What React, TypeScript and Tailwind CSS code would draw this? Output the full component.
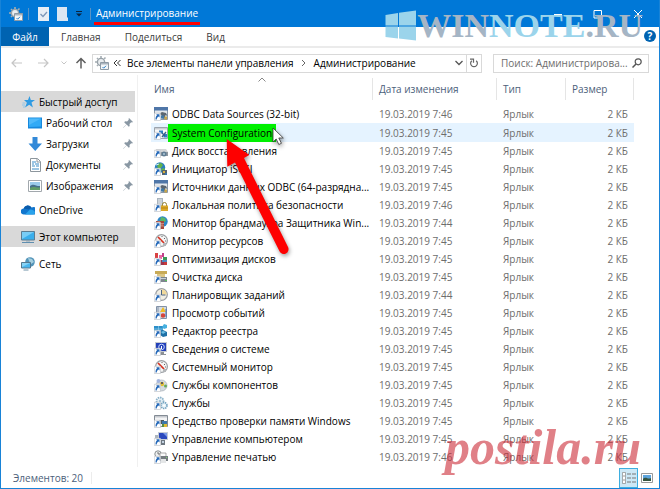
import React, { useState } from 'react';

type IconName =
    | 'odbc' | 'config' | 'drive' | 'globe' | 'policy' | 'firewall' | 'gauge' | 'defrag' | 'cleanup'
    | 'clock' | 'events' | 'registry' | 'info' | 'components' | 'services' | 'memory' | 'computer' | 'printer';

interface FileItem {
    name: string;
    date: string;
    icon: IconName;
}

const files: FileItem[] = [
    { name: 'ODBC Data Sources (32-bit)', date: '19.03.2019 7:46', icon: 'odbc' },
    { name: 'System Configuration', date: '19.03.2019 7:45', icon: 'config' },
    { name: 'Диск восстановления', date: '19.03.2019 7:45', icon: 'drive' },
    { name: 'Инициатор iSCSI', date: '19.03.2019 7:45', icon: 'globe' },
    { name: 'Источники данных ODBC (64-разрядна...', date: '19.03.2019 7:45', icon: 'odbc' },
    { name: 'Локальная политика безопасности', date: '19.03.2019 7:46', icon: 'policy' },
    { name: 'Монитор брандмауэра Защитника Win...', date: '19.03.2019 7:44', icon: 'firewall' },
    { name: 'Монитор ресурсов', date: '19.03.2019 7:45', icon: 'gauge' },
    { name: 'Оптимизация дисков', date: '19.03.2019 7:45', icon: 'defrag' },
    { name: 'Очистка диска', date: '19.03.2019 7:45', icon: 'cleanup' },
    { name: 'Планировщик заданий', date: '19.03.2019 7:44', icon: 'clock' },
    { name: 'Просмотр событий', date: '19.03.2019 7:45', icon: 'events' },
    { name: 'Редактор реестра', date: '19.03.2019 7:45', icon: 'registry' },
    { name: 'Сведения о системе', date: '19.03.2019 7:45', icon: 'info' },
    { name: 'Системный монитор', date: '19.03.2019 7:45', icon: 'gauge' },
    { name: 'Службы компонентов', date: '19.03.2019 7:45', icon: 'components' },
    { name: 'Службы', date: '19.03.2019 7:45', icon: 'services' },
    { name: 'Средство проверки памяти Windows', date: '19.03.2019 7:45', icon: 'memory' },
    { name: 'Управление компьютером', date: '19.03.2019 7:45', icon: 'computer' },
    { name: 'Управление печатью', date: '19.03.2019 7:46', icon: 'printer' },
];

const fileIcons: Record<IconName, React.ReactNode> = {
    odbc: (
        <>
            <path d="M0.5 0.5h13v12h-13z" fill="#e3e8ed" stroke="#8a98a8" />
            <path d="M0 0h14v3.5H0z" fill="#4f76a8" />
            <path d="M5 7l3-2 4 1 1.500 3-2-1-1 4-3-1V8z" fill="#5b6670" />
            <path d="M10.500 9.500h2.500v3h-2.500z" fill="#c9a64a" />
            <path d="M7 8.500h3v3H7z" fill="#3f79a8" />
        </>
    ),
    config: (
        <>
            <path d="M0.5 1.5h13v11h-13z" fill="#fafafa" stroke="#9aa3ad" />
            <path d="M1 2h12v1.5H1z" fill="#c8ccd2" />
            <path d="M5 4.500h4v3H5zM9.500 8h3.500v3.500H9.500z" fill="#2f7fc4" />
            <path d="M8 7l3 3M8 11l4-5" stroke="#3a5f8c" strokeWidth="1.300" />
        </>
    ),
    drive: (
        <>
            <path d="M2 5h10l2 3v4H1V8z" fill="#d3d5d7" />
            <path d="M2 8h12v4H2z" fill="#90979e" />
            <circle cx="10" cy="10" r="2.500" fill="#5f7d94" />
            <path d="M9 10h2" stroke="#d8edf8" />
        </>
    ),
    globe: (
        <>
            <circle cx="6" cy="5.500" r="5.200" fill="#2a7fc0" />
            <path d="M3 2l4-1 2 2-2 3-3 1zM7 7l3-1 1 2-3 2z" fill="#63b24b" />
            <path d="M2 3l3-1" stroke="#c9ecff" />
            <path d="M8 8h5v5H8z" fill="#55636e" />
            <path d="M9 9h2v2H9z" fill="#d8b13c" />
            <path d="M11 11h2v2h-2z" fill="#3976ad" />
        </>
    ),
    policy: (
        <>
            <path d="M3 0h6v11H3z" fill="#aab4bd" />
            <path d="M4 2h4M4 4h4M4 6h4" stroke="#eef2f5" />
            <path d="M8.500 8V6.500a2 2 0 014 0V8" fill="none" stroke="#94802f" />
            <path d="M7 7.500h7V13H7z" fill="#dcaa2a" />
            <path d="M7 10h7" stroke="#b98512" />
        </>
    ),
    firewall: (
        <>
            <circle cx="8.500" cy="5.500" r="5.200" fill="#2c86c9" />
            <path d="M7 1l4 1 1 3-3 2-3-2z" fill="#5cb663" />
            <path d="M2 5h8v8H2z" fill="#a7483a" />
            <path d="M2 7.500h8M2 10h8M5 5v2M8 8v2M5 10v3" stroke="#dba397" strokeWidth="0.700" />
        </>
    ),
    gauge: (
        <>
            <circle cx="7.500" cy="6.500" r="5.900" fill="#f3f4f4" stroke="#9b9fa3" strokeWidth="1.200" />
            <path d="M4 3l6 6" stroke="#d5301f" strokeWidth="1.700" />
            <path d="M8 2v1M11 4l-1 1M12 7h-1" stroke="#666" />
            <path d="M9 9h3v3H9z" fill="#b2b5b8" />
        </>
    ),
    defrag: (
        <>
            <path d="M1 1h3v5H1z" fill="#d94343" />
            <path d="M5 3h3v4H5z" fill="#eb67a2" />
            <path d="M8 1h2v4H8z" fill="#c1418b" />
            <path d="M9 5h4v3H9z" fill="#3a9a56" />
            <path d="M6 8h7v5H6z" fill="#9b364e" />
            <path d="M8 8h5v2H8z" fill="#4a8ac2" />
            <path d="M10 10h3v3h-3z" fill="#c93a3a" />
        </>
    ),
    cleanup: (
        <>
            <path d="M1 1h12v3H1z" fill="#c8aa57" />
            <path d="M3 4h8v3H3z" fill="#dcc684" />
            <path d="M5 7h8v5H5z" fill="#7d868e" />
            <path d="M6 8h6v1H6z" fill="#c9d0d5" />
            <path d="M11 10h2v1h-2z" fill="#5cc25b" />
        </>
    ),
    clock: (
        <>
            <circle cx="7.500" cy="6.500" r="5.800" fill="#f2efe4" stroke="#9a9ea3" strokeWidth="1.300" />
            <path d="M7.500 1.200a5.300 5.300 0 015.300 5.300H7.500z" fill="#f1d99a" />
            <path d="M7.500 2v5h4" fill="none" stroke="#4b6584" />
        </>
    ),
    events: (
        <>
            <path d="M2.500 0.500h10v12h-10z" fill="#d5dde6" stroke="#8292a8" />
            <path d="M4 1v11" stroke="#8292a8" />
            <path d="M6 6l3-5 3 5z" fill="#f0bd28" />
            <circle cx="9" cy="9.500" r="2.300" fill="#d4463b" />
            <path d="M12 3v8" stroke="#4972ad" />
        </>
    ),
    registry: (
        <>
            <path d="M0 2h9v7H0z" fill="#2d8fc9" />
            <path d="M0 5h9M4.500 2v7" stroke="#8ed0ee" strokeWidth="0.700" />
            <path d="M10 0l3 1v3l-3 1-2-2z" fill="#47b0df" />
            <path d="M6 7l3-1 4 2v4l-4 1-3-2z" fill="#1e6fa5" />
            <path d="M9 7l3 1-3 2-2-2z" fill="#6dbfe4" />
        </>
    ),
    info: (
        <>
            <path d="M1 0h12v10H1z" fill="#c5c9d0" />
            <path d="M2 1h10v8H2z" fill="#2340b8" />
            <circle cx="7.500" cy="5" r="2.800" fill="none" stroke="#c3d4ff" />
            <path d="M7.500 4v3" stroke="#fff" />
            <path d="M6 10h4v2h2v1H5z" fill="#8c9095" />
        </>
    ),
    components: (
        <>
            <circle cx="7.500" cy="7.500" r="5.500" fill="#d5dbe0" stroke="#a7afb6" strokeWidth="0.700" />
            <circle cx="4.500" cy="3" r="2" fill="#a5b6de" />
            <circle cx="8" cy="6" r="2.200" fill="#e2bf35" />
            <path d="M7 4h2v2H7z" fill="#68615d" />
            <circle cx="11.500" cy="8" r="1.500" fill="#68a957" />
        </>
    ),
    services: (
        <>
            <circle cx="6" cy="5" r="3.500" fill="#edf5fa" stroke="#8db3ca" strokeWidth="1.800" strokeDasharray="1.500 0.800" />
            <circle cx="10" cy="9.500" r="3" fill="#e4f1f8" stroke="#77a5c1" strokeWidth="1.600" strokeDasharray="1.400 0.700" />
            <circle cx="6" cy="5" r="1.300" fill="#a4c5d8" />
            <circle cx="10" cy="9.500" r="1" fill="#fff" />
        </>
    ),
    memory: (
        <>
            <path d="M0.500 1.500h13v11h-13z" fill="#f3f4f5" stroke="#838b94" />
            <path d="M1 2h12v1.500H1z" fill="#c5c9ce" />
            <path d="M5 6h5v4H5z" fill="#4e575d" />
            <path d="M8 7h5v6H8z" fill="#3e77ab" />
            <path d="M10 10h3v3h-3z" fill="#e1b935" />
            <path d="M8 10h2v3H8z" fill="#588e45" />
        </>
    ),
    computer: (
        <>
            <path d="M4 0h10v8H4z" fill="#c5ccd6" />
            <path d="M5 1h8v6H5z" fill="#2b49bd" />
            <path d="M9 1h4v4z" fill="#7c9be7" />
            <path d="M1 3h3v6H1z" fill="#abb5be" />
            <path d="M7 8h4v5H7z" fill="#6e7881" />
            <path d="M8 9h2v2H8z" fill="#c1d0df" />
        </>
    ),
    printer: (
        <>
            <circle cx="4" cy="4" r="3.200" fill="#eef0f0" stroke="#878d90" />
            <path d="M4 2v2h2" stroke="#555" fill="none" strokeWidth="0.800" />
            <path d="M6 3h6v4H6z" fill="#fafafa" stroke="#888" strokeWidth="0.700" />
            <path d="M5 6h9v5H5z" fill="#747b80" />
            <path d="M7 9h5v4H7z" fill="#e4e6e7" />
            <path d="M12 7h1v1h-1z" fill="#7fd26f" />
        </>
    ),
};

const FileIcon: React.FC<{ name: IconName }> = ({ name }) => (
    <svg viewBox="0 0 14 14" className="h-3.5 w-3.5 shrink-0">
        {fileIcons[name]}
        {/* shortcut badge */}
        <path d="M0.300 6.300h6.200v7.200h-6.200z" fill="#fff" stroke="#b9bec4" strokeWidth="0.600" />
        <path d="M1.500 12.500c0-2.400.6-3.700 1.600-4.300l-.9-1h3.300v3.300l-1-.9c-1 .6-1.600 1.500-1.800 2.900z" fill="#2468b8" />
    </svg>
);

const ToolsIcon: React.FC = () => (
    <svg viewBox="0 0 14 14" className="h-3.5 w-3.5 shrink-0">
        <circle cx="6" cy="6" r="3.600" fill="#e9edf0" stroke="#98a1a8" strokeWidth="1.400" />
        <path d="M6 0v2M6 10v2M0 6h2M2 2l1 1M9 3l1.500-1.500M2 10l1-1" stroke="#a4adb3" strokeWidth="1.600" />
        <path d="M5.500 6.500h8v7h-8z" fill="#f3f6f8" stroke="#8e9aa5" />
        <path d="M6 7h7v1.500H6z" fill="#aab5bf" />
        <path d="M7.500 11l1.200 1.200L11 9.800" stroke="#2e83cb" fill="none" />
    </svg>
);

type NavIcon = 'star' | 'desktop' | 'download' | 'document' | 'picture' | 'cloud' | 'pc' | 'network';

const navIcons: Record<NavIcon, React.ReactNode> = {
    star: (
        <>
            <path d="M8.500 1l1.300 4H14l-3.500 2.600 1.400 4.800-3.700-2.700L4 12.600l1.900-4.900L3 5h4z" fill="#2f9be3" />
            <path d="M1.500 8h3M1 10h3M2 12h2" stroke="#7fc1ee" strokeWidth="0.800" />
        </>
    ),
    desktop: (
        <>
            <path d="M0 1.500h14v11H0z" fill="#1688dd" />
            <path d="M1 2.500h12v8L1 11z" fill="#31aaf6" />
            <path d="M1 2.500h12L1 9z" fill="#4fb9fa" />
        </>
    ),
    download: <path d="M4.500 0h5v6.500H14L7.200 14 .5 6.500h4z" fill="#3289d8" />,
    document: (
        <>
            <path d="M2.500 0.500h7l3 3v10h-10z" fill="#fff" stroke="#8d969d" />
            <path d="M9 1v3h3" stroke="#8d969d" fill="none" />
            <path d="M4 4h4M4 6h2M7 6h4M4 8h3M8 8h3M4 11h7" stroke="#3b8bc6" />
        </>
    ),
    picture: (
        <>
            <path d="M0.500 1.500h13v11h-13z" fill="#fff" stroke="#a2a8ad" />
            <path d="M2 3h10v8H2z" fill="#9bcbea" />
            <path d="M2 7c4-3 5 0 10 0v4H2z" fill="#47708b" />
            <path d="M2 9c4-2 6 0 10-.5V11H2z" fill="#5f9c67" />
        </>
    ),
    cloud: (
        <>
            <path d="M3 11.500a3 3 0 01-.4-6A4.500 4.500 0 0110.500 4.500 3.700 3.700 0 0114 11.500z" fill="#1276ce" />
            <path d="M4 11.500l5-5c3 0 5 1.500 5 3.300 0 1-1 1.700-2 1.700z" fill="#2aa3ec" />
            <path d="M2.600 5.500A4.500 4.500 0 0110.500 4.500L8 6.500z" fill="#0b5cab" />
        </>
    ),
    pc: (
        <>
            <path d="M0.500 1.500h13v8.500h-13z" fill="#39aeec" stroke="#5b7d93" />
            <path d="M1 2h12L1 9z" fill="#78cdf6" />
            <path d="M5 10h4v1.500H5z" fill="#90a5b2" />
            <path d="M1 12.500h12" stroke="#5f8eaf" />
        </>
    ),
    network: (
        <>
            <circle cx="9" cy="5" r="4.800" fill="#5294b9" />
            <path d="M7 1l4 1 2 3-3 2-2-3z" fill="#a5cfdf" />
            <path d="M0.500 5.500h9v5.500h-9z" fill="#48b6ef" stroke="#54788f" />
            <path d="M1 6h8l-8 4z" fill="#87d3f6" />
            <path d="M2.500 13h5" stroke="#6f91a7" />
        </>
    ),
};

interface NavItemProps {
    icon: NavIcon;
    label: string;
    pinned?: boolean;
    active?: boolean;
}

const NavItem: React.FC<NavItemProps> = ({ icon, label, pinned, active }) => (
    <a
        href="#"
        className={`flex h-[21px] items-center gap-1 pr-0.5 text-black ${pinned ? 'pl-[27px]' : 'pl-5'} ${active ? 'bg-[#d9d9d9]' : ''}`}
    >
        <svg viewBox="0 0 14 14" className="h-3.5 w-3.5 shrink-0">{navIcons[icon]}</svg>
        <span className="flex-1 whitespace-nowrap">{label}</span>
        {pinned && (
            <svg viewBox="0 0 10 10" className="h-2.5 w-2.5 shrink-0">
                <path d="M6 0l4 4-1 .6-.8-.3-1.700 1.700.2 1.900-.9.900-2.200-2.200L.5 9.800l-.3-.3 3.200-3.100L1.200 4.200l.9-.9 2 .2L5.800 1.800 5.500.9z" fill="#8997a3" />
            </svg>
        )}
    </a>
);

const Separator: React.FC = () => <span className="h-3 w-px bg-[#5a93c4]" />;

const App: React.FC = () => {
    const [query, setQuery] = useState('');
    const [selected, setSelected] = useState(1);

    return (
        <div className="relative flex min-h-screen flex-col border border-t-0 border-[#1883d7] bg-white font-['Open_Sans','Noto_Sans',sans-serif] text-[10px] leading-4">
            {/* Title bar */}
            <header className="flex h-[27px] items-center bg-[#0078d7] pl-2 pr-4 text-white">
                <ToolsIcon />
                <div className="ml-[5px] flex items-center">
                    <Separator />
                    <button aria-label="Свойства" className="ml-[9px]">
                        <svg viewBox="0 0 11 14" className="h-3.5 w-[11px]">
                            <path d="M0 0h11v14H0z" fill="#e8eef5" />
                            <path d="M2.500 7l2.500 2.500L9 5" stroke="#7c96b8" strokeWidth="1.300" fill="none" />
                        </svg>
                    </button>
                    <button aria-label="Новая папка" className="ml-2">
                        <svg viewBox="0 0 11 14" className="h-3.5 w-[11px]">
                            <path d="M0 0h10v10l1 1v3H0z" fill="#dbe6f3" />
                        </svg>
                    </button>
                    <button aria-label="Настройка панели" className="mx-2">
                        <svg viewBox="0 0 6 6" className="h-1.5 w-1.5">
                            <path d="M0 0.500h6" stroke="#0b2440" />
                            <path d="M0 2.500h6L3 5.500z" fill="#0b2440" />
                        </svg>
                    </button>
                    <Separator />
                </div>
                <h1 className="ml-[3px] mt-[3px] border-b-[3px] border-[#fe0000] px-0.5 pb-px">Администрирование</h1>
                <div className="ml-auto flex items-center gap-[30px]">
                    <button aria-label="Свернуть">
                        <svg viewBox="0 0 10 10" className="h-2.5 w-2.5"><path d="M1 5.500h8" stroke="#fff" /></svg>
                    </button>
                    <button aria-label="Развернуть">
                        <svg viewBox="0 0 10 10" className="h-2.5 w-2.5"><path d="M1 1.500h7.500V9H1z" fill="none" stroke="#fff" /></svg>
                    </button>
                    <button aria-label="Закрыть">
                        <svg viewBox="0 0 10 10" className="h-2.5 w-2.5"><path d="M1 1l8 8M9 1l-8 8" stroke="#fff" /></svg>
                    </button>
                </div>
            </header>

            {/* Ribbon tabs */}
            <nav className="flex h-[21px] border-b-2 border-[#ebebeb] text-[#3c3c3c]">
                <button className="w-12 bg-[#0063b1] text-white">Файл</button>
                <button className="ml-3">Главная</button>
                <button className="ml-6">Поделиться</button>
                <button className="ml-6">Вид</button>
                <button aria-label="Справка" className="ml-auto mr-[3px] mt-[3px] h-3 w-3 rounded-full bg-[#0063b1] font-bold leading-3 text-white">?</button>
            </nav>

            {/* Address bar */}
            <div className="flex h-[27px] items-center pl-2.5 pr-2.5 pt-[3px]">
                <div className="flex items-center text-[#c6c6c6]">
                    <button aria-label="Назад">
                        <svg viewBox="0 0 12 12" className="h-3 w-3"><path d="M11 6H1.500M5 2L1 6l4 4" fill="none" stroke="currentColor" strokeWidth="1.200" /></svg>
                    </button>
                    <button aria-label="Вперед" className="ml-3.5">
                        <svg viewBox="0 0 12 12" className="h-3 w-3"><path d="M1 6h9.500M7 2l4 4-4 4" fill="none" stroke="currentColor" strokeWidth="1.200" /></svg>
                    </button>
                    <button aria-label="Журнал" className="ml-3">
                        <svg viewBox="0 0 6 6" className="h-1.5 w-1.5"><path d="M0.500 1.500L3 4l2.500-2.500" fill="none" stroke="currentColor" /></svg>
                    </button>
                    <button aria-label="Вверх" className="ml-2 mr-[5px] text-[#5f5f5f]">
                        <svg viewBox="0 0 12 12" className="h-3 w-3"><path d="M6 11.500V1.500M1.500 6L6 1.500 10.500 6" fill="none" stroke="currentColor" strokeWidth="1.500" /></svg>
                    </button>
                </div>
                <div className="flex h-[19px] flex-1 items-center border border-[#d9d9d9] pl-0.5 text-black">
                    <ToolsIcon />
                    <svg viewBox="0 0 8 8" className="ml-1 mr-1.5 h-2 w-2"><path d="M4 1L1 4l3 3M7.500 1l-3 3 3 3" fill="none" stroke="#333" /></svg>
                    <a href="#" className="whitespace-nowrap">Все элементы панели управления</a>
                    <svg viewBox="0 0 8 8" className="mx-1.5 h-2 w-2"><path d="M2 1l3 3-3 3" fill="none" stroke="#666" /></svg>
                    <a href="#">Администрирование</a>
                    <button aria-label="Предыдущие расположения" className="ml-auto mr-[3px]">
                        <svg viewBox="0 0 8 8" className="h-2 w-2"><path d="M0.500 2L4 5.500 7.500 2" fill="none" stroke="#555" strokeWidth="1.300" /></svg>
                    </button>
                    <button aria-label="Обновить" className="flex h-full items-center border-l border-[#d9d9d9] px-0.5">
                        <svg viewBox="0 0 10 10" className="h-2.5 w-2.5">
                            <path d="M7.200 2.700A3.400 3.400 0 112.800 2.700" fill="none" stroke="#666" strokeWidth="1.200" />
                            <path d="M1 1.200h3.500v3.500" fill="none" stroke="#666" strokeWidth="1.200" />
                        </svg>
                    </button>
                </div>
                <label className="ml-[11px] flex h-[19px] w-[156px] items-center border border-[#d9d9d9] pl-[7px] pr-1.5">
                    <input
                        type="text"
                        aria-label="Поиск"
                        value={query}
                        onChange={(e) => setQuery(e.target.value)}
                        placeholder="Поиск: Администрирова..."
                        className="min-w-0 flex-1 outline-none placeholder:text-[#6d6d6d]"
                    />
                    <svg viewBox="0 0 10 10" className="h-2.5 w-2.5 shrink-0">
                        <circle cx="6.200" cy="3.800" r="3" fill="none" stroke="#555" strokeWidth="1.200" />
                        <path d="M4 6L0.500 9.500" stroke="#555" strokeWidth="1.500" />
                    </svg>
                </label>
            </div>

            <div className="flex flex-1">
                {/* Navigation pane */}
                <aside className="flex w-[137px] shrink-0 flex-col border-r border-[#f0f0f0] pr-0.5 pt-4">
                    <NavItem icon="star" label="Быстрый доступ" active />
                    <NavItem icon="desktop" label="Рабочий стол" pinned />
                    <NavItem icon="download" label="Загрузки" pinned />
                    <NavItem icon="document" label="Документы" pinned />
                    <NavItem icon="picture" label="Изображения" pinned />
                    <div className="mt-[3px] flex flex-col gap-1.5">
                        <NavItem icon="cloud" label="OneDrive" />
                        <NavItem icon="pc" label="Этот компьютер" active />
                        <NavItem icon="network" label="Сеть" />
                    </div>
                </aside>

                {/* File list */}
                <main className="relative flex-1 pl-[13px] pr-[25px]">
                    <table className="w-full table-fixed border-separate border-spacing-0 text-left">
                        <colgroup>
                            <col />
                            <col className="w-[124px]" />
                            <col className="w-[69px]" />
                            <col className="w-[68px]" />
                        </colgroup>
                        <thead className="text-[#4c607a]">
                            <tr className="h-7">
                                <th className="relative p-0 font-normal">
                                    <div className="border-r border-[#e5e5e5] pl-[3px] leading-[22px]">Имя</div>
                                    <svg viewBox="0 0 8 5" className="absolute left-1/2 top-0.5 h-[5px] w-2 -translate-x-1/2"><path d="M0.500 4.500L4 1l3.500 3.500" fill="none" stroke="#888" /></svg>
                                </th>
                                {['Дата изменения', 'Тип', 'Размер'].map((title) => (
                                    <th key={title} className="p-0 font-normal">
                                        <div className="border-r border-[#e5e5e5] pl-1.5 leading-[22px]">{title}</div>
                                    </th>
                                ))}
                            </tr>
                        </thead>
                        <tbody className="text-[#6d6d6d] before:block before:h-0.5">
                            {files.map((file, i) => (
                                <tr
                                    key={file.name}
                                    onClick={() => setSelected(i)}
                                    className={selected === i ? 'h-[19px] bg-[#e5f3ff]' : 'h-[18px]'}
                                >
                                    <td className="p-0 pl-[3px]">
                                        <div className="flex items-center whitespace-nowrap text-black">
                                            <FileIcon name={file.icon} />
                                            <span className={i === 1 ? 'bg-[#00f000] px-1 py-px' : 'px-1'}>{file.name}</span>
                                        </div>
                                    </td>
                                    <td className="p-0 pl-1.5">{file.date}</td>
                                    <td className="p-0 pl-1.5">Ярлык</td>
                                    <td className="p-0 pr-1.5 text-right">2 КБ</td>
                                </tr>
                            ))}
                        </tbody>
                    </table>

                    {/* Pointer and callout arrow */}
                    <svg viewBox="0 0 90 140" className="pointer-events-none absolute left-[82px] top-[49px] h-[140px] w-[90px] drop-shadow-[1px_2px_2px_rgba(0,0,0,0.4)]">
                        <path d="M6.700 15L29.300 31l-5.300 3L68 123a4.700 4.700 0 01-8.500 4.300L15 38.500l-7.700 4.200z" fill="#fe0000" />
                        <path d="M53 4v14l3.200-3 2.600 5.500 2.600-1.200-2.600-5.300h4.500z" fill="#fff" stroke="#333" strokeWidth="0.800" />
                    </svg>
                </main>
            </div>

            {/* Status bar */}
            <footer className="flex h-[21px] items-center pl-3 pr-1.5 text-[#4c607a]">
                <span>Элементов: 20</span>
                <span className="ml-2 h-3 w-px bg-[#ececec]" />
                <button aria-label="Таблица" className="ml-auto flex h-5 w-[19px] items-center justify-center border border-[#3eaee0] bg-[#cce8f6]">
                    <svg viewBox="0 0 14 12" className="h-3 w-3.5">
                        <path d="M0.500 0.500h3v11h-3z" fill="#fff" stroke="#888" strokeWidth="0.700" />
                        <path d="M1 4h2M1 8h2" stroke="#999" />
                        <path d="M5 2h4M10 2h4M5 6h4M10 6h4M5 10h4M10 10h4" stroke="#777" />
                    </svg>
                </button>
                <button aria-label="Крупные значки" className="ml-[3px]">
                    <svg viewBox="0 0 12 10" className="h-2.5 w-3">
                        <path d="M0.500 0.500h11v9h-11z" fill="#fff" stroke="#999" />
                        <path d="M2 2h8v6H2z" fill="#5da4dc" />
                        <path d="M2 6c3-3 5 1 8-1v3H2z" fill="#36543f" />
                    </svg>
                </button>
            </footer>

            {/* Watermarks */}
            <div className="pointer-events-none absolute right-4 top-2 flex items-center font-['Liberation_Serif',serif] text-[34px] font-bold leading-9">
                <svg viewBox="0 0 32 32" className="h-8 w-8">
                    <path d="M0.500 5L13 3v12.500H0.500zM14 2.800L31 0.500v15H14zM0.500 16.500H13v12L0.500 27zM14 16.500h17v14L14 28.500z" fill="#9bd4eb" />
                </svg>
                <span className="text-[#a5b5c5]">
                    WIN<span className="text-[#9bd4eb]">NOTE</span>.RU
                </span>
            </div>
            <div className="pointer-events-none absolute bottom-4 right-[18px] font-['Liberation_Serif',serif] text-[50px] font-bold italic leading-[50px] text-[#cb2b37]/60">
                postila.ru
            </div>
        </div>
    );
};

export default App;
